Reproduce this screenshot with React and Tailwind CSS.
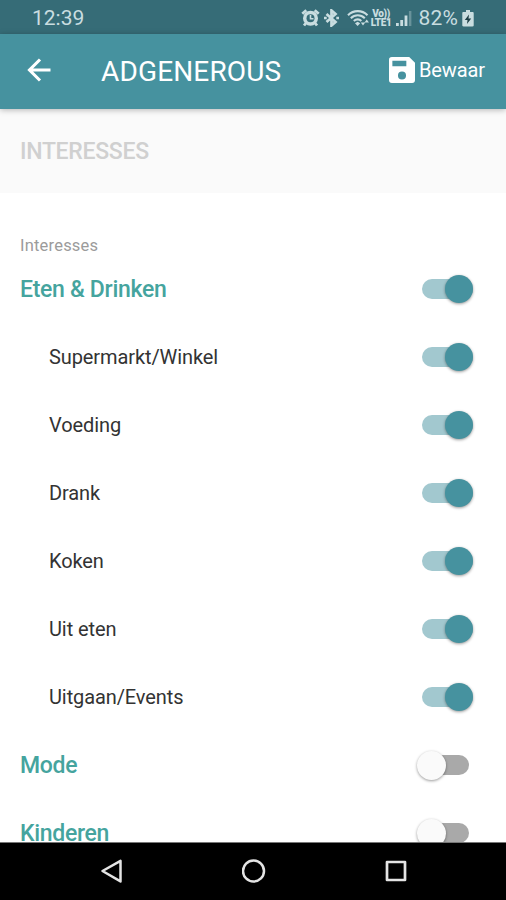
import React, { useState } from 'react';

const initialItems = [
    { name: 'Eten & Drinken', group: true, enabled: true },
    { name: 'Supermarkt/Winkel', enabled: true },
    { name: 'Voeding', enabled: true },
    { name: 'Drank', enabled: true },
    { name: 'Koken', enabled: true },
    { name: 'Uit eten', enabled: true },
    { name: 'Uitgaan/Events', enabled: true },
    { name: 'Mode', group: true, enabled: false },
    { name: 'Kinderen', group: true, enabled: false },
];

function StatusBar() {
    return (
        <div className="flex h-[34px] shrink-0 items-center bg-[#366c77] pl-8 pr-[32px] pt-[2px] text-[21px] leading-none text-[#c9dde0]">
            <span>12:39</span>
            <div className="ml-auto flex items-center">
                {/* Alarm */}
                <svg className="h-[18px] w-[19px]" viewBox="0 0 18 18" fill="none" stroke="currentColor">
                    <path d="M.8 4.8 4.8 1.2M17.2 4.8l-4-3.6M4.5 14l-2 2.5M13.5 14l2 2.5" strokeWidth="2.8" />
                    <circle cx="9" cy="9.3" r="7.5" fill="currentColor" stroke="none" />
                    <circle cx="9" cy="9.3" r="4" fill="#366c77" stroke="none" />
                    <path d="M9 6v3.8h3" strokeWidth="1.6" />
                </svg>
                {/* Bluetooth */}
                <svg className="ml-[3px] h-[18px] w-[17px]" viewBox="0 0 16 18" fill="none" stroke="currentColor" strokeWidth="2.7">
                    <path d="m3 5 9 8-4 3.500v-15L12 5l-9 8" />
                    <path d="M.5 9h2.700M12.800 9h2.700" strokeWidth="2.600" />
                </svg>
                {/* Wifi */}
                <svg className="ml-[7px] h-[18px] w-[23px]" viewBox="0 0 23 18" fill="none" stroke="currentColor" strokeWidth="2.100">
                    <path d="M1 6.200c5.500-5.400 14-5.400 19.500 0M3.800 9.200c4-3.900 10-3.900 14 0M6.800 12c2.400-2.200 5.500-2.200 7.500 0" />
                    <path d="m8 14.200 2.600-1.500 2.600 1.500-2.600 2.800z" fill="currentColor" stroke="none" />
                    <path d="M13.800 13.500 16 16.500l2.200-3zM17.500 13.500l2.200-3 2.300 3z" fill="currentColor" stroke="none" />
                </svg>
                <div className="w-[23px] text-center text-[10px] font-black leading-[9px] tracking-[-0.4px]">
                    <div>Vo))</div>
                    <div>LTE1</div>
                </div>
                {/* Signal strength */}
                <svg className="ml-[3px] h-[17px] w-[16px]" viewBox="0 0 16 17" fill="currentColor">
                    <path d="M0 13h2.800v3H0zM4.300 10h2.800v6H4.300zM8.600 5.500h2.800V16H8.600z" />
                    <path d="M12.900 1h2.500v15h-2.500z" opacity=".35" />
                </svg>
                <span className="ml-[7px] tracking-[0.15px]">82%</span>
                {/* Battery */}
                <svg className="ml-[4px] h-[17px] w-[12px]" viewBox="0 0 12 17" fill="currentColor">
                    <path d="M4 0h4v2h2.500c.8 0 1.200.4 1.200 1.200v12c0 .8-.4 1.200-1.200 1.200h-9C.7 16.400.3 16 .3 15.200v-12C.3 2.400.7 2 1.500 2H4z" />
                    <path d="M7 4.500 2.800 10h2.700L5 14l4.200-5.500H6.500z" fill="#1f3f46" />
                </svg>
            </div>
        </div>
    );
}

function AppBar() {
    return (
        <header className="z-10 flex h-[75px] shrink-0 items-center bg-[#46929f] pb-[3px] pl-[27px] pr-[21px] text-white shadow-[0_1px_6px_rgba(0,0,0,0.28)]">
            <svg className="h-[24px] w-[24px]" viewBox="0 0 24 24" fill="none" stroke="currentColor" strokeWidth="3.100">
                <path d="M23.500 12H2.500M13 1.500 2.500 12 13 22.500" />
            </svg>
            <h1 className="ml-[50px] pt-[3px] text-[28px] leading-none tracking-[0.15px]">ADGENEROUS</h1>
            <button className="ml-auto flex items-center gap-[4px] text-[20px] leading-none">
                <svg className="h-[26px] w-[26px]" viewBox="0 0 27 27" fill="currentColor" fillRule="evenodd">
                    <path d="M3 0h18l6 6v18a3 3 0 0 1-3 3H3a3 3 0 0 1-3-3V3a3 3 0 0 1 3-3zM3.500 4v5.500H18V4zM13.500 15a4.200 4.200 0 1 0 0 8.400 4.200 4.200 0 0 0 0-8.400z" />
                </svg>
                <span className="tracking-[-0.1px]">Bewaar</span>
            </button>
        </header>
    );
}

function Toggle({ enabled, onChange }) {
    return (
        <button
            role="switch"
            aria-checked={enabled}
            onClick={onChange}
            className={`flex h-[28px] items-center ${enabled ? 'w-[51px] justify-end' : 'mr-[4px] w-[52px]'}`}
        >
            {enabled ? (
                <span className="flex h-[20px] w-full items-center justify-end rounded-full bg-[#a2c8cf]">
                    <span className="h-[28px] w-[28px] shrink-0 rounded-full bg-[#46929f] shadow-[0_1px_3px_rgba(0,0,0,0.4)]" />
                </span>
            ) : (
                <span className="ml-[5px] flex h-[20px] w-full items-center rounded-full bg-[#a9a9a9]">
                    <span className="-ml-[5px] h-[29px] w-[29px] shrink-0 rounded-full bg-[#fafafa] shadow-[0_1px_3px_rgba(0,0,0,0.4)]" />
                </span>
            )}
        </button>
    );
}

function NavigationBar() {
    return (
        <nav className="z-10 flex h-[58px] shrink-0 items-center justify-between border-t border-[#777] bg-black pb-[2px] pl-[100px] pr-[98px] text-[#e4e4e4]">
            <svg className="h-[24px] w-[24px]" viewBox="0 0 24 24" fill="none" stroke="currentColor" strokeWidth="2.500" strokeLinejoin="round">
                <path d="M20.500 1.800v20.600L2.500 12z" />
            </svg>
            <svg className="h-[24px] w-[24px]" viewBox="0 0 24 24" fill="none" stroke="currentColor" strokeWidth="2.500">
                <circle cx="11.500" cy="12" r="10.500" />
            </svg>
            <svg className="h-[24px] w-[24px]" viewBox="0 0 24 24" fill="none" stroke="currentColor" strokeWidth="2.700" strokeLinejoin="round">
                <path d="M3 3h18v18H3z" />
            </svg>
        </nav>
    );
}

export default function App() {
    const [items, setItems] = useState(initialItems);

    const toggleItem = (name) => {
        setItems(items.map((item) => (item.name === name ? { ...item, enabled: !item.enabled } : item)));
    };

    return (
        <div className="flex h-[900px] w-[506px] flex-col overflow-hidden bg-white font-['Roboto',sans-serif]">
            <StatusBar />
            <AppBar />

            <div className="flex h-[84px] shrink-0 items-center bg-[#fafafa] pl-[20px]">
                <h2 className="text-[23px] font-medium leading-none tracking-[-0.3px] text-[#d0d0d0]">INTERESSES</h2>
            </div>

            <main className="min-h-0 flex-1 overflow-hidden">
                <p className="mt-[42px] h-[20px] pl-[20px] pt-px text-[16.500px] leading-[20px] tracking-[0.2px] text-[#9b9b9b]">Interesses</p>
                {items.map((item) => (
                    <div
                        key={item.name}
                        className={`flex h-[68px] items-center justify-between pr-[33px] ${item.group ? 'pl-[20px]' : 'pl-[49px]'}`}
                    >
                        <span className={item.group ? 'pt-[3px] text-[23px] font-medium tracking-[-0.3px] text-[#45a49e]' : 'text-[20px] tracking-[-0.1px] text-[#333]'}>
                            {item.name}
                        </span>
                        <Toggle enabled={item.enabled} onChange={() => toggleItem(item.name)} />
                    </div>
                ))}
            </main>

            <NavigationBar />
        </div>
    );
}
